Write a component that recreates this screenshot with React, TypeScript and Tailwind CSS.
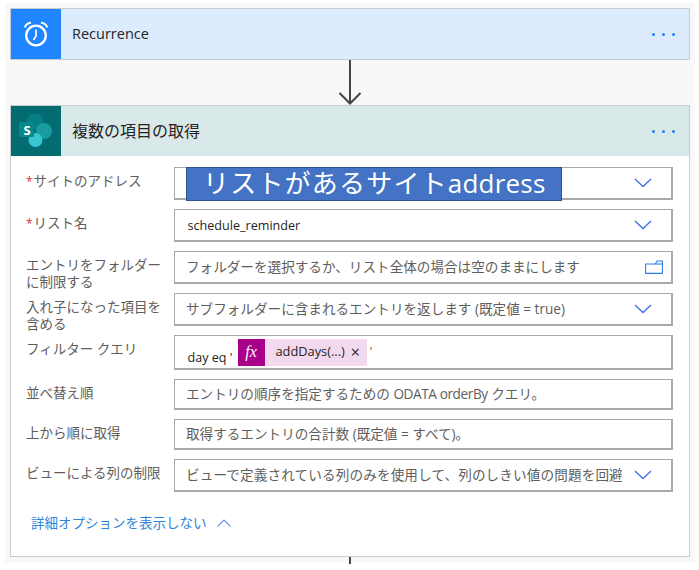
import React from "react";

const FONT = "font-['Open_Sans','Noto_Sans_CJK_JP',sans-serif]";

function Dots() {
  return (
    <div className="flex items-center gap-[7px] mr-[14px]">
      <span className="w-[3px] h-[3px] rounded-full bg-[#1a86f0]" />
      <span className="w-[3px] h-[3px] rounded-full bg-[#1a86f0]" />
      <span className="w-[3px] h-[3px] rounded-full bg-[#1a86f0]" />
    </div>
  );
}

function Chevron() {
  return (
    <svg width="18" height="10" viewBox="0 0 18 10" fill="none" className="shrink-0">
      <path d="M1 1l8 7.5L17 1" stroke="#3b6fe8" strokeWidth="1.3" />
    </svg>
  );
}

function FolderIcon() {
  return (
    <svg width="18" height="14" viewBox="0 0 18 14" fill="none" className="shrink-0 -mr-[11px]">
      <path d="M.6 13.4V4h9.6l2-3h5.2v12.4z" stroke="#2b7de9" strokeWidth="1.1" />
      <path d="M10 4h7.4" stroke="#2b7de9" strokeWidth="1.1" />
    </svg>
  );
}

function Row({ label, required, h, children, right }: { label: React.ReactNode; required?: boolean; h: string; children?: React.ReactNode; right?: React.ReactNode }) {
  return (
    <div className={`flex items-stretch ${h}`}>
      <div className="w-[148px] shrink-0 text-[13.5px] leading-[17px] text-[#605e5c] pt-[5.5px] whitespace-nowrap">
        {required && <span className="text-[#d13438] text-[12px] mr-[1px]">*</span>}
        {label}
      </div>
      <div className="flex-1 border-2 border-[#a9a9a9] border-l-[1.5px] border-t-[1.5px] bg-white flex items-center pl-[11px] pr-[19px] min-w-0">
        <div className="flex-1 min-w-0 overflow-hidden whitespace-nowrap text-[13.6px] text-[#605e5c]">{children}</div>
        {right}
      </div>
    </div>
  );
}

export default function App() {
  return (
    <div className={`w-[699px] h-[570px] bg-white pt-[3px] pl-[5px] pr-[4px] overflow-hidden ${FONT}`}>
      <div className="h-[560px] bg-[#f8f8f8] px-[5px] pt-[5px] flex flex-col items-stretch">
        <div className="h-[52px] shrink-0 flex border border-[#c8ccd0] bg-[#dcebfe] items-center">
          <div className="w-[50px] h-full bg-[#1f86ff] flex items-center justify-center shrink-0">
            <svg width="28" height="28" viewBox="0 0 28 28" fill="none" stroke="white" strokeWidth="2.3">
              <circle cx="14" cy="15.5" r="9.8" />
              <path d="M14 9.5v6.5l-2.5 4" strokeWidth="1.6" />
              <path d="M2.8 7.5C3.8 4.5 6 3 9 2.8M25.2 7.5C24.2 4.5 22 3 19 2.8" strokeWidth="2" />
            </svg>
          </div>
          <div className="flex-1 pl-[11px] text-[14.5px] text-[#252423]">Recurrence</div>
          <Dots />
        </div>

        <div className="h-[45px] flex justify-center shrink-0">
          <svg width="26" height="45" viewBox="0 0 26 45" fill="none" stroke="#444" strokeWidth="2">
            <path d="M13 0v44" />
            <path d="M2.5 33L13 43.5 23.5 33" />
          </svg>
        </div>

        <div className="h-[452px] shrink-0 border border-[#c8ccd0] bg-white flex flex-col relative">
          <div className="h-[50px] flex bg-[#d9e8e8] items-center shrink-0">
            <div className="w-[50px] h-full bg-[#036c70] flex items-center justify-center shrink-0">
              <svg width="34" height="34" viewBox="0 0 34 34">
                <circle cx="16" cy="8" r="8.5" fill="#047f83" />
                <circle cx="25" cy="17" r="8" fill="#1a9ba1" />
                <circle cx="16.5" cy="26" r="7" fill="#37c6d0" />
                <rect x="0" y="8" width="15" height="15" rx="1.5" fill="#04898d" />
                <text x="8" y="20.5" textAnchor="middle" fontSize="13" fontWeight="700" fill="white" fontFamily="Open Sans">S</text>
              </svg>
            </div>
            <div className="flex-1 pl-[11px] text-[16px] text-[#252423]">複数の項目の取得</div>
            <Dots />
          </div>

          <div className="pl-[15px] pr-[16px] pt-[11px] flex flex-col gap-[9px]">
            <Row label="サイトのアドレス" required h="h-[33px]" right={<Chevron />} />
            <Row label="リスト名" required h="h-[33px]" right={<Chevron />}>
              <span className="text-[#252423] text-[12.6px] ml-[1.5px]">schedule_reminder</span>
            </Row>
            <Row label={<>エントリをフォルダー<br />に制限する</>} h="h-[33px]" right={<FolderIcon />}>
              フォルダーを選択するか、リスト全体の場合は空のままにします
            </Row>
            <Row label={<>入れ子になった項目を<br />含める</>} h="h-[33px]" right={<Chevron />}>
              サブフォルダーに含まれるエントリを返します (既定値 = true)
            </Row>
            <Row label="フィルター クエリ" h="h-[35px]">
              <div className="flex items-center text-[12.6px] text-[#252423] h-[27px]">
                <span className="w-[51.5px] pl-[1.5px] pt-[12px] whitespace-pre">day eq '</span>
                <span className="flex items-center h-[27px] w-[129px] shrink-0 bg-[#f2d9ee]">
                  <span className="w-[27px] h-[27px] bg-[#a8008a] text-white flex items-center justify-center font-['Liberation_Serif',serif] italic text-[16px]">fx</span>
                  <span className="ml-[11px] text-[12.8px]">addDays(...)</span>
                  <span className="ml-[6px] text-[16px] leading-none">×</span>
                </span>
                <span className="ml-[3px] text-[#605e5c]">'</span>
              </div>
            </Row>
            <Row label="並べ替え順" h="h-[31px]">
              エントリの順序を指定するための <span className="tracking-[-0.4px]">ODATA orderBy</span> クエリ。
            </Row>
            <Row label="上から順に取得" h="h-[31px]">
              取得するエントリの合計数 (既定値 = すべて)。
            </Row>
            <Row label="ビューによる列の制限" h="h-[33px]" right={<div className="ml-[10px]"><Chevron /></div>}>
              <span className="tracking-[0.13px]">ビューで定義されている列のみを使用して、列のしきい値の問題を回避</span>
            </Row>
            <div className="mt-[12px] pl-[5px] flex items-center text-[13.5px] text-[#2f86d8]">
              詳細オプションを表示しない
              <svg width="14" height="8" viewBox="0 0 14 8" fill="none" className="ml-[10px]">
                <path d="M.7 7.3L7 1l6.3 6.3" stroke="#5b8de8" strokeWidth="1.1" />
              </svg>
            </div>
          </div>

          <div className="absolute left-[175px] top-[61px] w-[376px] h-[34px] bg-[#4472c4] border border-[#2f528f] text-white text-[26px] leading-[30px] tracking-[1.2px] pl-[16px] whitespace-nowrap">
            リストがあるサイト<span className="tracking-[0.2px]">address</span>
          </div>
        </div>
        <div className="h-[7px] flex justify-center shrink-0">
          <div className="w-[2px] h-full bg-[#444]" />
        </div>
      </div>
    </div>
  );
}
